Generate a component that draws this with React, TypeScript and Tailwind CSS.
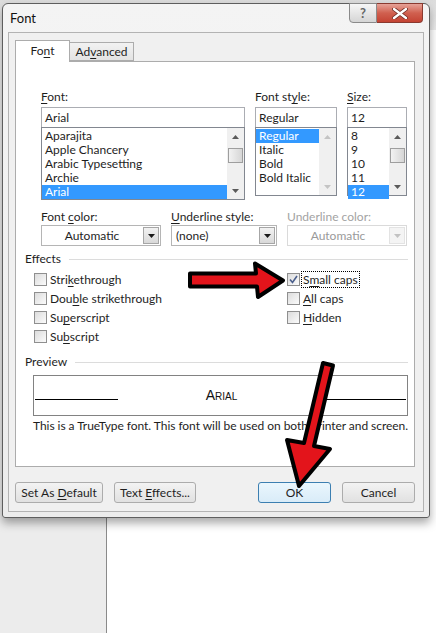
import type { ReactNode } from "react";

const fonts = ["Aparajita", "Apple Chancery", "Arabic Typesetting", "Archie", "Arial"];
const styles = ["Regular", "Italic", "Bold", "Bold Italic"];
const sizes = ["8", "9", "10", "11", "12"];

function U({ children }: { children: ReactNode }) {
  return <span className="underline decoration-1 underline-offset-[2px]">{children}</span>;
}

function Label({ children, muted }: { children: ReactNode; muted?: boolean }) {
  return (
    <div className={muted ? "h-[16px] leading-[16px] text-[#a3a3a3]" : "h-[16px] leading-[16px] text-[#1e1e1e]"}>
      {children}
    </div>
  );
}

function Arrow({ up, color }: { up?: boolean; color: string }) {
  return (
    <div className="flex h-[17px] items-center justify-center">
      <svg width="7" height="4" viewBox="0 0 7 4">
        <path d={up ? "M0 4 L3.5 0 L7 4Z" : "M0 0 L7 0 L3.5 4Z"} fill={color} />
      </svg>
    </div>
  );
}

function ScrollBar({ thumb, disabled }: { thumb?: boolean; disabled?: boolean }) {
  const c = disabled ? "#c4c4c4" : "#5a5a5a";
  return (
    <div className="flex w-[17px] flex-col bg-[#f0f0f0]">
      <Arrow up color={c} />
      <div className="flex-1">
        {thumb && (
          <div className="mx-auto mt-[3px] h-[15px] w-[15px] border border-[#9e9e9e] bg-gradient-to-r from-[#f2f2f2] to-[#d6d6d6]" />
        )}
      </div>
      <Arrow color={c} />
    </div>
  );
}

function ListRow({ text, selected }: { text: string; selected?: boolean }) {
  return (
    <div
      className={
        selected
          ? "h-[14px] bg-[#3399ff] pl-[3px] leading-[14px] text-white"
          : "h-[14px] pl-[3px] leading-[14px] text-[#1e1e1e]"
      }
    >
      {text}
    </div>
  );
}

function DropBtn({ disabled }: { disabled?: boolean }) {
  return (
    <div
      className={
        disabled
          ? "m-px flex w-[16px] items-center justify-center border border-[#e3e3e3] bg-[#f4f4f4]"
          : "m-px flex w-[16px] items-center justify-center border border-[#a6a6a6] bg-gradient-to-b from-[#f2f2f2] to-[#d9d9d9]"
      }
    >
      <svg width="7" height="4" viewBox="0 0 7 4">
        <path d="M0 0 L7 0 L3.5 4Z" fill={disabled ? "#c2c2c2" : "#1a1a1a"} />
      </svg>
    </div>
  );
}

function Check({ checked }: { checked?: boolean }) {
  return (
    <div className="flex h-[13px] w-[13px] shrink-0 items-center justify-center border border-[#8f8f8f] bg-gradient-to-br from-[#dcdcdc] to-[#fbfbfb]">
      {checked && (
        <svg width="9" height="9" viewBox="0 0 9 9">
          <path d="M1 4.5 L3.5 7.5 L8 1" stroke="#4b5f8c" strokeWidth="1.6" fill="none" />
        </svg>
      )}
    </div>
  );
}

function Effect({ children, checked, focus }: { children: ReactNode; checked?: boolean; focus?: boolean }) {
  return (
    <div className="flex h-[19px] items-center">
      <Check checked={checked} />
      <span
        className={
          focus
            ? "ml-px border border-dotted border-black px-px leading-[15px]"
            : "ml-px border border-transparent px-px leading-[15px]"
        }
      >
        {children}
      </span>
    </div>
  );
}

function Section({ title }: { title: string }) {
  return (
    <div className="flex h-[16px] items-center gap-[8px]">
      <span className="leading-[16px]">{title}</span>
      <div className="h-px flex-1 bg-[#dcdcdc]" />
    </div>
  );
}

function Button({ children, primary, className }: { children: ReactNode; primary?: boolean; className: string }) {
  return (
    <div
      className={
        primary
          ? `flex h-[21px] items-center justify-center rounded-[3px] border border-[#3c7fb1] bg-gradient-to-b from-[#eaf6fd] to-[#d9ecf8] ${className}`
          : `flex h-[21px] items-center justify-center rounded-[3px] border border-[#acacac] bg-gradient-to-b from-[#f3f3f3] to-[#e1e1e1] ${className}`
      }
    >
      {children}
    </div>
  );
}

export default function App() {
  return (
    <div className="relative h-[633px] w-[436px] overflow-hidden bg-white font-['Lato','Noto_Sans',sans-serif] text-[12px] text-[#1e1e1e]">
      {/* document behind the dialog */}
      <div className="flex h-full flex-col">
        <div className="h-[30px] bg-gradient-to-b from-[#dcdcdc] to-[#ececec]" />
        <div className="flex flex-1">
          <div className="w-[107px] border-r border-[#8a8a8a] bg-[#ececec]" />
          <div className="flex-1 bg-white" />
        </div>
      </div>

      {/* dialog window */}
      <div className="absolute left-[2px] top-[3px] h-[515px] w-[428px] rounded-t-[6px] rounded-b-[3px] border border-[#5e5e5e] bg-gradient-to-b from-[#f4f4f4] to-[#ececec] px-[5px] pb-[5px] shadow-[0_5px_10px_rgba(0,0,0,0.35)]">
        <div className="flex h-[28px] items-center pl-[2px] text-[13px] leading-none text-[#111]">Font</div>

        <div className="absolute right-[6px] top-[-1px] flex h-[20px]">
          <div className="flex w-[28px] items-center justify-center rounded-bl-[4px] border border-[#8a8a8a] bg-gradient-to-b from-[#f7f7f7] to-[#d5d5d5] text-[13px] font-bold leading-none text-[#666]">
            ?
          </div>
          <div className="flex w-[46px] items-center justify-center rounded-br-[4px] border border-l-0 border-[#8a3a30] bg-gradient-to-b from-[#e6a298] via-[#d0604f] to-[#c44333]">
            <svg width="16" height="11" viewBox="0 0 16 11">
              <path d="M2 1 L14 10 M14 1 L2 10" stroke="#6b2a22" strokeWidth="4" strokeLinecap="round" />
              <path d="M2 1 L14 10 M14 1 L2 10" stroke="#ffffff" strokeWidth="2.4" strokeLinecap="round" />
            </svg>
          </div>
        </div>

        <div className="h-[480px] border border-[#b3b3b3] bg-[#f0f0f0] pl-[6px] pr-[8px] pt-[7px]">
          {/* tabs */}
          <div className="flex h-[21px] items-end">
            <div className="relative z-10 -mb-px flex h-[22px] w-[55px] items-center justify-center border border-b-0 border-[#acacac] bg-white pb-[2px]">
              <span>
                Fo<U>n</U>t
              </span>
            </div>
            <div className="flex h-[19px] w-[64px] items-center justify-center border border-l-0 border-[#acacac] bg-gradient-to-b from-[#f2f2f2] to-[#e3e3e3]">
              <span>
                Ad<U>v</U>anced
              </span>
            </div>
          </div>

          {/* tab page */}
          <div className="h-[406px] border border-[#acacac] bg-white pl-[9px] pr-[6px]">
            <div className="ml-[16px] mt-[27px] flex gap-[10px]">
              <div className="w-[204px]">
                <Label>
                  <U>F</U>ont:
                </Label>
                <div className="mt-[2px] h-[21px] border border-[#abadb3] pl-[3px] leading-[19px]">Arial</div>
                <div className="-mt-px flex h-[73px] border border-[#828790]">
                  <div className="flex-1 pt-px">
                    {fonts.map((f) => (
                      <ListRow key={f} text={f} selected={f === "Arial"} />
                    ))}
                  </div>
                  <ScrollBar thumb />
                </div>
              </div>
              <div className="w-[82px]">
                <Label>
                  Font st<U>y</U>le:
                </Label>
                <div className="mt-[2px] h-[21px] border border-[#abadb3] pl-[3px] leading-[19px]">Regular</div>
                <div className="-mt-px flex h-[69px] border border-[#828790]">
                  <div className="flex-1 pt-px">
                    {styles.map((s) => (
                      <ListRow key={s} text={s} selected={s === "Regular"} />
                    ))}
                  </div>
                  <ScrollBar disabled />
                </div>
              </div>
              <div className="w-[60px]">
                <Label>
                  <U>S</U>ize:
                </Label>
                <div className="mt-[2px] h-[21px] border border-[#abadb3] pl-[3px] leading-[19px]">12</div>
                <div className="-mt-px flex h-[69px] border border-[#828790]">
                  <div className="flex-1 pt-px">
                    {sizes.map((s) => (
                      <ListRow key={s} text={s} selected={s === "12"} />
                    ))}
                  </div>
                  <ScrollBar thumb />
                </div>
              </div>
            </div>

            <div className="ml-[16px] mt-[9px] flex gap-[10px]">
              <div className="w-[120px]">
                <Label>
                  Font <U>c</U>olor:
                </Label>
                <div className="flex h-[21px] border border-[#b5b5b5]">
                  <span className="flex-1 text-center leading-[19px]">Automatic</span>
                  <DropBtn />
                </div>
              </div>
              <div className="w-[106px]">
                <Label>
                  <U>U</U>nderline style:
                </Label>
                <div className="flex h-[21px] border border-[#b5b5b5]">
                  <span className="flex-1 pl-[4px] leading-[19px]">(none)</span>
                  <DropBtn />
                </div>
              </div>
              <div className="w-[120px]">
                <Label muted>Underline color:</Label>
                <div className="flex h-[21px] border border-[#dadada]">
                  <span className="flex-1 text-center leading-[19px] text-[#9a9a9a]">Automatic</span>
                  <DropBtn disabled />
                </div>
              </div>
            </div>

            <div className="mt-[5px]">
              <Section title="Effects" />
            </div>
            <div className="ml-[9px] mt-[3px] grid grid-cols-[253px_1fr]">
              <Effect>
                Stri<U>k</U>ethrough
              </Effect>
              <Effect checked focus>
                S<U>m</U>all caps
              </Effect>
              <Effect>
                Dou<U>b</U>le strikethrough
              </Effect>
              <Effect>
                <U>A</U>ll caps
              </Effect>
              <Effect>
                Su<U>p</U>erscript
              </Effect>
              <Effect>
                <U>H</U>idden
              </Effect>
              <Effect>
                Su<U>b</U>script
              </Effect>
              <div />
            </div>

            <div className="mt-[8px]">
              <Section title="Preview" />
            </div>
            <div className="ml-[8px] mt-[5px] h-[41px] border border-[#828282] px-px pt-[11px]">
              <div className="flex items-baseline">
                <div className="h-0 w-[83px] border-b border-black" />
                <div className="flex-1 text-center font-['Liberation_Sans',Arial,sans-serif] text-[14px] leading-[16px] [font-variant:small-caps] text-[#111]">
                  Arial
                </div>
                <div className="h-0 w-[81px] border-b border-black" />
              </div>
            </div>
            <div className="ml-[8px] mt-[2px] h-[16px] whitespace-nowrap leading-[16px] tracking-[-0.05px]">
              This is a TrueType font. This font will be used on both printer and screen.
            </div>
          </div>

          {/* buttons */}
          <div className="mt-[15px] flex gap-[11px]">
            <Button className="w-[88px]">
              <span>
                Set As <U>D</U>efault
              </span>
            </Button>
            <Button className="w-[82px]">
              <span>
                Text <U>E</U>ffects...
              </span>
            </Button>
            <div className="flex-1" />
            <Button primary className="w-[73px]">
              OK
            </Button>
            <Button className="w-[73px]">Cancel</Button>
          </div>
        </div>
      </div>

      {/* red annotation arrows */}
      <svg className="pointer-events-none absolute inset-0" width="436" height="633" viewBox="0 0 436 633">
        <path
          d="M190 273.5 L256 273.5 L255 263.5 L283 280.5 L258 297 L257 286.5 L190 286.5 Z"
          fill="#e3141b"
          stroke="#000"
          strokeWidth="4"
          strokeLinejoin="round"
        />
        <path
          d="M323 363 L304 443 L287 440 L299 486 L330 449 L314 446 L333 365.5 Z"
          fill="#e3141b"
          stroke="#000"
          strokeWidth="4"
          strokeLinejoin="round"
        />
      </svg>
    </div>
  );
}
